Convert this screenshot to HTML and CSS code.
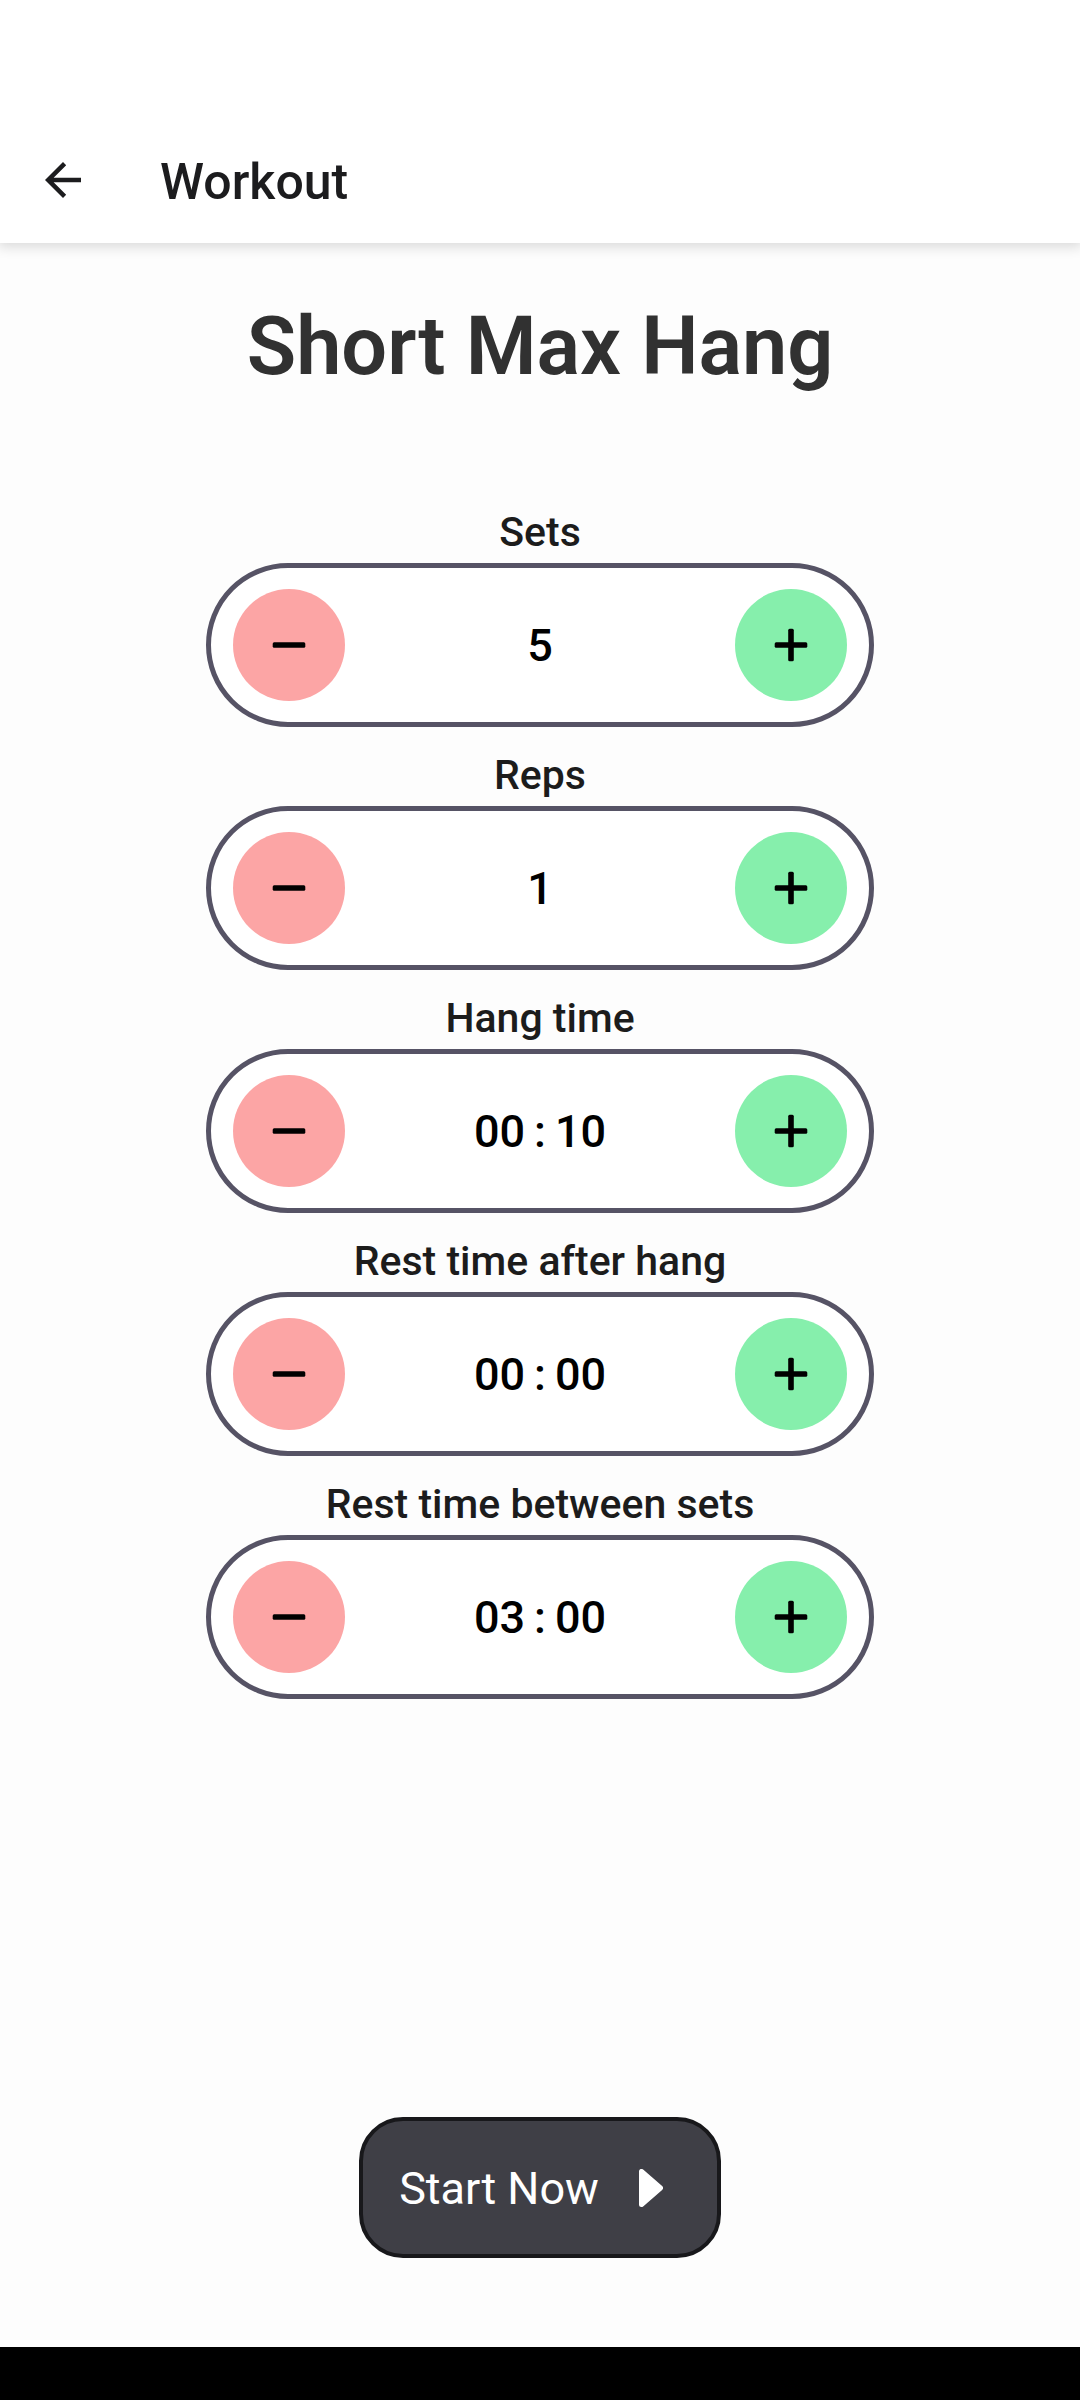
FILE: index.html
```html
<!DOCTYPE html>
<html lang="en">
<head>
<meta charset="utf-8">
<meta name="viewport" content="width=device-width, initial-scale=1">
<title>Workout</title>
<link rel="stylesheet" href="styles.css">
</head>
<body>
<header class="app-bar">
  <a class="back" href="#" aria-label="Back">
    <svg class="back-icon" viewBox="0 0 24 24" aria-hidden="true"><path d="M20 11H7.83l5.59-5.59L12 4l-8 8 8 8 1.41-1.41L7.83 13H20v-2z"/></svg>
  </a>
  <span class="app-title">Workout</span>
</header>
<main class="screen">
  <h1 class="heading">Short Max Hang</h1>
  <div class="fields">
    <section class="field">
      <h2 class="label" id="sets">Sets</h2>
      <div class="stepper" role="group" aria-labelledby="sets">
        <button class="step minus" type="button" aria-label="Decrease sets"><svg class="step-icon" viewBox="0 0 34 34" aria-hidden="true"><rect x="0.7" y="14.2" width="32.6" height="5.6" rx="1.5"/></svg></button>
        <output class="value">5</output>
        <button class="step plus" type="button" aria-label="Increase sets"><svg class="step-icon" viewBox="0 0 34 34" aria-hidden="true"><rect x="0.7" y="14.2" width="32.6" height="5.6" rx="1.5"/><rect x="14.2" y="0.7" width="5.6" height="32.6" rx="1.5"/></svg></button>
      </div>
    </section>
    <section class="field">
      <h2 class="label" id="reps">Reps</h2>
      <div class="stepper" role="group" aria-labelledby="reps">
        <button class="step minus" type="button" aria-label="Decrease reps"><svg class="step-icon" viewBox="0 0 34 34" aria-hidden="true"><rect x="0.7" y="14.2" width="32.6" height="5.6" rx="1.5"/></svg></button>
        <output class="value">1</output>
        <button class="step plus" type="button" aria-label="Increase reps"><svg class="step-icon" viewBox="0 0 34 34" aria-hidden="true"><rect x="0.7" y="14.2" width="32.6" height="5.6" rx="1.5"/><rect x="14.2" y="0.7" width="5.6" height="32.6" rx="1.5"/></svg></button>
      </div>
    </section>
    <section class="field">
      <h2 class="label" id="hang">Hang time</h2>
      <div class="stepper" role="group" aria-labelledby="hang">
        <button class="step minus" type="button" aria-label="Decrease hang time"><svg class="step-icon" viewBox="0 0 34 34" aria-hidden="true"><rect x="0.7" y="14.2" width="32.6" height="5.6" rx="1.5"/></svg></button>
        <output class="value"><span>00</span><span>:</span><span>10</span></output>
        <button class="step plus" type="button" aria-label="Increase hang time"><svg class="step-icon" viewBox="0 0 34 34" aria-hidden="true"><rect x="0.7" y="14.2" width="32.6" height="5.6" rx="1.5"/><rect x="14.2" y="0.7" width="5.6" height="32.6" rx="1.5"/></svg></button>
      </div>
    </section>
    <section class="field">
      <h2 class="label" id="rest-hang">Rest time after hang</h2>
      <div class="stepper" role="group" aria-labelledby="rest-hang">
        <button class="step minus" type="button" aria-label="Decrease rest time after hang"><svg class="step-icon" viewBox="0 0 34 34" aria-hidden="true"><rect x="0.7" y="14.2" width="32.6" height="5.6" rx="1.5"/></svg></button>
        <output class="value"><span>00</span><span>:</span><span>00</span></output>
        <button class="step plus" type="button" aria-label="Increase rest time after hang"><svg class="step-icon" viewBox="0 0 34 34" aria-hidden="true"><rect x="0.7" y="14.2" width="32.6" height="5.6" rx="1.5"/><rect x="14.2" y="0.7" width="5.6" height="32.6" rx="1.5"/></svg></button>
      </div>
    </section>
    <section class="field">
      <h2 class="label" id="rest-sets">Rest time between sets</h2>
      <div class="stepper" role="group" aria-labelledby="rest-sets">
        <button class="step minus" type="button" aria-label="Decrease rest time between sets"><svg class="step-icon" viewBox="0 0 34 34" aria-hidden="true"><rect x="0.7" y="14.2" width="32.6" height="5.6" rx="1.5"/></svg></button>
        <output class="value"><span>03</span><span>:</span><span>00</span></output>
        <button class="step plus" type="button" aria-label="Increase rest time between sets"><svg class="step-icon" viewBox="0 0 34 34" aria-hidden="true"><rect x="0.7" y="14.2" width="32.6" height="5.6" rx="1.5"/><rect x="14.2" y="0.7" width="5.6" height="32.6" rx="1.5"/></svg></button>
      </div>
    </section>
  </div>
  <button class="start" type="button">
    <span>Start Now</span>
    <svg class="play-icon" viewBox="0 0 24 38" aria-hidden="true"><path d="M2.5 2.5v33l19-16.5z"/></svg>
  </button>
</main>
<footer class="nav-bar"></footer>
</body>
</html>
```
FILE: styles.css
```css
* {
  box-sizing: border-box;
}

body {
  margin: 0;
  min-height: 100vh;
  display: flex;
  flex-direction: column;
  background: #fdfdfd;
  color: #1c1c1c;
  font-family: Roboto, "Liberation Sans", sans-serif;
}

.app-bar {
  display: flex;
  align-items: center;
  gap: 70px;
  padding: 120px 36px 3px;
  background: #fff;
  box-shadow: 0 2px 12px 2px rgba(0, 0, 0, 0.14);
}

.back {
  display: flex;
  padding: 33px 0;
}

.back-icon {
  width: 54px;
  height: 54px;
  fill: #1c1c1e;
}

.app-title {
  padding-top: 4px;
  font-size: 50px;
  line-height: 60px;
  font-weight: 500;
  color: #1c1c1e;
}

.screen {
  flex: 1;
  display: flex;
  flex-direction: column;
  align-items: center;
  padding: 48px 32px 89px;
}

.heading {
  margin: 0 0 98px;
  font-size: 81px;
  line-height: 112px;
  font-weight: 600;
  color: #313131;
}

.fields {
  width: 100%;
  max-width: 668px;
  display: flex;
  flex-direction: column;
  gap: 17px;
}

.label {
  margin: 0;
  padding: 3px 0;
  font-size: 41px;
  line-height: 56px;
  font-weight: 500;
  text-align: center;
}

.stepper {
  display: flex;
  align-items: center;
  justify-content: space-between;
  padding: 21px 22px;
  border: 5px solid #565365;
  border-radius: 82px;
  background: #fff;
}

.step {
  display: flex;
  align-items: center;
  justify-content: center;
  width: 112px;
  height: 112px;
  padding: 0;
  border: 0;
  border-radius: 50%;
}

.minus {
  background: #fca5a5;
}

.plus {
  background: #86efac;
}

.step-icon {
  width: 34px;
  height: 34px;
  fill: #000;
}

.value {
  display: flex;
  gap: 9px;
  padding-top: 2px;
  font-size: 45px;
  line-height: 56px;
  font-weight: 500;
  color: #000;
}

.start {
  display: flex;
  align-items: center;
  gap: 40px;
  margin-top: auto;
  padding: 37px 54px 37px 36px;
  border: 4px solid #18181b;
  border-radius: 44px;
  background: #3f3f46;
  color: #fff;
  font-family: inherit;
  font-size: 45px;
  line-height: 56px;
}

.start span {
  padding-top: 3px;
}

.play-icon {
  width: 24px;
  height: 38px;
  fill: #fff;
  stroke: #fff;
  stroke-width: 5;
  stroke-linejoin: round;
}

.nav-bar {
  height: 53px;
  background: #000;
}
```
